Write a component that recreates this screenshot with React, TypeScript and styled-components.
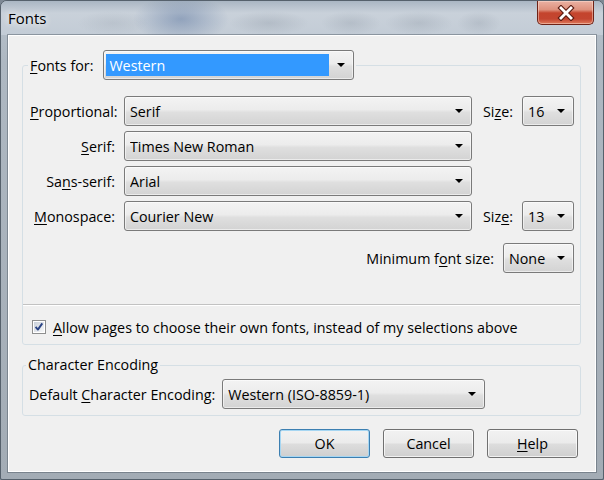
import styled, { createGlobalStyle } from "styled-components";

const GlobalStyle = createGlobalStyle`
  html, body {
    margin: 0;
    padding: 0;
  }
  body {
    width: 604px;
    height: 480px;
    overflow: hidden;
    background: #7d8894;
    font-family: "Open Sans", "Noto Sans", sans-serif;
    font-size: 14.3px;
    color: #000;
  }
`;

const Window = styled.div`
  width: 604px;
  height: 480px;
  box-sizing: border-box;
  display: flex;
  flex-direction: column;
  border: 1px solid #56616c;
  border-radius: 7px 7px 2px 2px;
  background: linear-gradient(#b9c3cd 0, #aeb8c2 60px, #a3acb5 100%);
  overflow: hidden;
`;

const TitleBar = styled.div`
  height: 34px;
  flex: none;
  display: flex;
  align-items: flex-start;
  background:
    radial-gradient(ellipse 48px 24px at 180px 18px, rgba(70, 100, 148, 0.42), rgba(70, 100, 148, 0)),
    radial-gradient(ellipse 40px 12px at 268px 22px, rgba(80, 92, 108, 0.16), rgba(80, 92, 108, 0)),
    radial-gradient(ellipse 30px 12px at 350px 22px, rgba(80, 92, 108, 0.15), rgba(80, 92, 108, 0)),
    radial-gradient(ellipse 34px 12px at 418px 22px, rgba(80, 92, 108, 0.15), rgba(80, 92, 108, 0)),
    radial-gradient(ellipse 22px 12px at 478px 22px, rgba(80, 92, 108, 0.14), rgba(80, 92, 108, 0)),
    radial-gradient(ellipse 36px 12px at 112px 22px, rgba(80, 92, 108, 0.1), rgba(80, 92, 108, 0)),
    linear-gradient(#aab6c3 0, #c9d1da 12px, #c3ccd6 100%);
`;

const Title = styled.div`
  margin: 7px 0 0 7px;
  font-size: 15px;
  text-shadow: 0 0 6px rgba(255, 255, 255, 0.9), 0 0 10px rgba(255, 255, 255, 0.7);
`;

const CloseButton = styled.div`
  margin-left: auto;
  margin-right: 9px;
  width: 57px;
  height: 24px;
  box-sizing: border-box;
  display: flex;
  align-items: center;
  justify-content: center;
  border: 1px solid #6e2216;
  border-top: none;
  border-radius: 0 0 5px 5px;
  background: linear-gradient(#eab1a3 0%, #de917d 38%, #c4442d 52%, #c34530 78%, #e07a5b 100%);
  box-shadow: inset 0 0 0 1px rgba(255, 230, 220, 0.45);
`;

const Client = styled.div`
  flex: 1;
  margin: 0 7px 7px;
  padding: 14px 14px 0 13px;
  background: #f0f0f0;
  border: 1px solid #fff;
  box-shadow: 0 0 0 1px rgba(70, 82, 94, 0.45);
  display: flex;
  flex-direction: column;
`;

const Group = styled.fieldset<{ $pad: string; $gap?: number }>`
  margin: ${(p) => p.$gap ?? 0}px 0 0;
  min-width: 0;
  padding: ${(p) => p.$pad};
  border: 1px solid #d5dfe5;
  border-radius: 3px;
`;

const FontsLegend = styled.legend`
  display: flex;
  align-items: center;
  gap: 10px;
  height: 30px;
  padding: 0 2px;
  margin-left: -2px;
`;

const TextLegend = styled.legend`
  padding: 0 2px;
  margin-left: -3px;
  line-height: 20px;
`;

const FontGrid = styled.div`
  display: grid;
  grid-template-columns: 94px 359px 39px 52px;
  grid-auto-rows: 30px;
  row-gap: 5px;
  align-items: center;
`;

const Label = styled.div`
  text-align: right;
  padding-right: 9px;
  white-space: nowrap;
`;

const SizeLabel = styled.div`
  white-space: nowrap;
`;

const Key = styled.span`
  text-decoration: underline;
  text-underline-offset: 2px;
`;

const Combo = styled.div<{ $w: number }>`
  box-sizing: border-box;
  width: ${(p) => p.$w}px;
  height: 30px;
  display: flex;
  align-items: center;
  padding-left: 5px;
  border: 1px solid #7a7a7a;
  border-radius: 3px;
  background: linear-gradient(#f3f3f3 0%, #ececec 45%, #dfdfdf 55%, #d3d3d3 100%);
  box-shadow: inset 0 0 0 1px rgba(255, 255, 255, 0.55);
`;

const FocusCombo = styled(Combo)`
  padding-left: 2px;
`;

const Selected = styled.div`
  flex: 1;
  align-self: stretch;
  margin: 3px 0;
  padding-left: 3px;
  display: flex;
  align-items: center;
  background: #3399ff;
  color: #fff;
`;

const ComboText = styled.div`
  flex: 1;
  white-space: nowrap;
  overflow: hidden;
`;

const Arrow = styled.div`
  flex: none;
  width: 0;
  height: 0;
  margin: 0 8px 0 8px;
  border-left: 4px solid transparent;
  border-right: 4px solid transparent;
  border-top: 4px solid #000;
`;

const RightRow = styled.div`
  display: flex;
  justify-content: flex-end;
  align-items: center;
  gap: 9px;
  margin-top: 12px;
`;

const Separator = styled.div`
  margin: 31px -6px 0 -7px;
  border-top: 1px solid #c2c2c2;
  border-bottom: 1px solid #fff;
`;

const CheckRow = styled.div`
  display: flex;
  align-items: center;
  gap: 7px;
  height: 20px;
  margin-top: 11px;
  padding-left: 2px;
`;

const EncodingRow = styled.div`
  display: flex;
  align-items: center;
  gap: 7px;
`;

const ButtonRow = styled.div`
  display: flex;
  justify-content: flex-end;
  gap: 13px;
  margin-top: 13px;
  padding-right: 3px;
`;

const Button = styled.div<{ $default?: boolean }>`
  box-sizing: border-box;
  width: 91px;
  height: 29px;
  display: flex;
  align-items: center;
  justify-content: center;
  border: 1px solid ${(p) => (p.$default ? "#3c7fb1" : "#707070")};
  border-radius: 3px;
  background: linear-gradient(#f2f2f2 0%, #ebebeb 48%, #dddddd 52%, #cfcfcf 100%);
  box-shadow: inset 0 0 0 1px ${(p) => (p.$default ? "#a6d6f2" : "rgba(255,255,255,0.7)")};
`;

function Dropdown({ w, value }: { w: number; value: string }) {
  return (
    <Combo $w={w}>
      <ComboText>{value}</ComboText>
      <Arrow />
    </Combo>
  );
}

function CheckBox() {
  return (
    <svg width="14" height="14" viewBox="0 0 14 14">
      <defs>
        <linearGradient id="cb" x1="0" y1="0" x2="1" y2="1">
          <stop offset="0" stopColor="#c9d0da" />
          <stop offset="1" stopColor="#f7f8f9" />
        </linearGradient>
      </defs>
      <rect x="0.5" y="0.5" width="13" height="13" fill="#fff" stroke="#8e8f8f" />
      <rect x="2" y="2" width="10" height="10" fill="url(#cb)" />
      <path d="M3.6 6.9 L5.9 9.6 L10.3 3.4" fill="none" stroke="#2a4384" strokeWidth="1.9" strokeLinejoin="round" />
    </svg>
  );
}

export default function App() {
  return (
    <>
      <GlobalStyle />
      <Window>
        <TitleBar>
          <Title>Fonts</Title>
          <CloseButton>
            <svg width="20" height="16" viewBox="0 0 20 16">
              <path d="M5 3 L15 13 M15 3 L5 13" stroke="#5a1a10" strokeWidth="5" strokeLinecap="square" />
              <path d="M5 3 L15 13 M15 3 L5 13" stroke="#fff" strokeWidth="2.8" strokeLinecap="square" />
            </svg>
          </CloseButton>
        </TitleBar>
        <Client>
          <Group $pad="16px 6px 7px 7px">
            <FontsLegend>
              <span>
                <Key>F</Key>onts for:
              </span>
              <FocusCombo $w={251}>
                <Selected>Western</Selected>
                <Arrow />
              </FocusCombo>
            </FontsLegend>
            <FontGrid>
              <Label>
                <Key>P</Key>roportional:
              </Label>
              <Dropdown w={348} value="Serif" />
              <SizeLabel>
                Si<Key>z</Key>e:
              </SizeLabel>
              <Dropdown w={52} value="16" />
              <Label>
                <Key>S</Key>erif:
              </Label>
              <Dropdown w={348} value="Times New Roman" />
              <div />
              <div />
              <Label>
                Sa<Key>n</Key>s-serif:
              </Label>
              <Dropdown w={348} value="Arial" />
              <div />
              <div />
              <Label>
                <Key>M</Key>onospace:
              </Label>
              <Dropdown w={348} value="Courier New" />
              <SizeLabel>
                Siz<Key>e</Key>:
              </SizeLabel>
              <Dropdown w={52} value="13" />
            </FontGrid>
            <RightRow>
              <span>
                Minimum f<Key>o</Key>nt size:
              </span>
              <Dropdown w={71} value="None" />
            </RightRow>
            <Separator />
            <CheckRow>
              <CheckBox />
              <span>
                <Key>A</Key>llow pages to choose their own fonts, instead of my selections above
              </span>
            </CheckRow>
          </Group>
          <Group $pad="4px 6px 6px 6px" $gap={10}>
            <TextLegend>Character Encoding</TextLegend>
            <EncodingRow>
              <span>
                Default <Key>C</Key>haracter Encoding:
              </span>
              <Dropdown w={263} value="Western (ISO-8859-1)" />
            </EncodingRow>
          </Group>
          <ButtonRow>
            <Button $default>OK</Button>
            <Button>Cancel</Button>
            <Button>
              <span>
                <Key>H</Key>elp
              </span>
            </Button>
          </ButtonRow>
        </Client>
      </Window>
    </>
  );
}
